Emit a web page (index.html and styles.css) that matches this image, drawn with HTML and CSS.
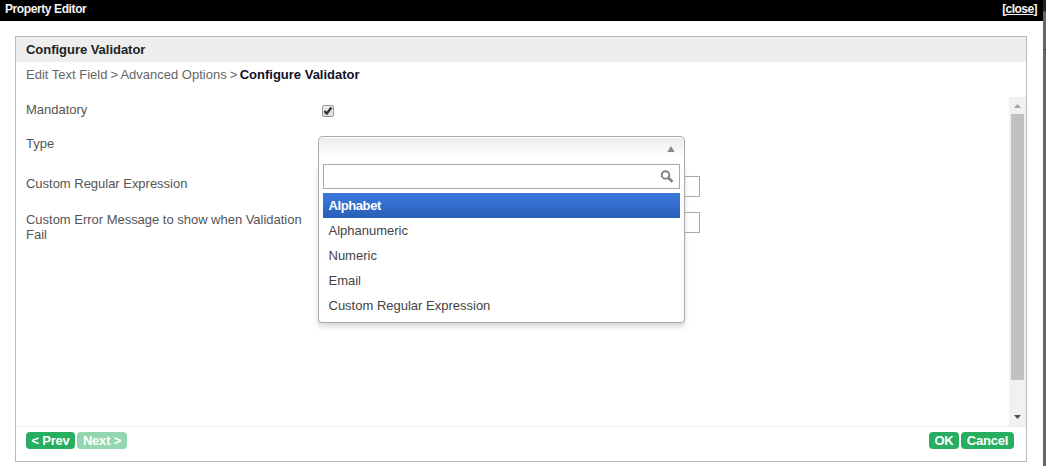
FILE: index.html
```html
<!DOCTYPE html>
<html lang="en">
<head>
<meta charset="utf-8">
<title>Property Editor</title>
<link rel="stylesheet" href="styles.css">
</head>
<body>
<div class="shell">
  <main class="dialog">
    <header class="topbar"><span class="topbar-title">Property Editor</span><a class="close">[<u>close</u>]</a></header>
    <section class="panel">
      <h1 class="panel-title">Configure Validator</h1>
      <nav class="crumbs">Edit Text Field<span class="sep"> &gt; </span>Advanced Options<span class="sep"> &gt; </span><b class="current">Configure Validator</b></nav>
      <div class="scroller">
        <form class="fields">
          <div class="row row-mandatory">
            <label class="label">Mandatory</label>
            <span class="checkbox"><svg class="tick" width="10" height="10" viewBox="0 0 10 10"><path d="M1.4 5.2 3.8 7.4 8.4 1.6" fill="none" stroke="#333" stroke-width="2.4"/></svg></span>
          </div>
          <div class="row row-type">
            <label class="label">Type</label>
            <div class="select">
              <div class="select-head"><svg width="8" height="6" viewBox="0 0 8 6"><path d="M4 0 7.7 6H.3z" fill="#888"/></svg></div>
              <div class="menu">
                <div class="search"><svg width="14" height="14" viewBox="0 0 14 14"><circle cx="5.5" cy="5" r="3.8" fill="none" stroke="#808080" stroke-width="1.9"/><path d="m8.2 7.8 4.3 4" stroke="#808080" stroke-width="2.6"/></svg></div>
                <ul class="options">
                  <li class="option active">Alphabet</li>
                  <li class="option">Alphanumeric</li>
                  <li class="option">Numeric</li>
                  <li class="option">Email</li>
                  <li class="option">Custom Regular Expression</li>
                </ul>
              </div>
            </div>
          </div>
          <div class="row"><label class="label">Custom Regular Expression</label><span class="input"></span></div>
          <div class="row"><label class="label">Custom Error Message to show when Validation Fail</label><span class="input"></span></div>
        </form>
        <div class="scrollbar">
          <svg class="arrow" width="17" height="17" viewBox="0 0 17 17"><path d="M8.5 7 12 11H5z" fill="#a3a3a3"/></svg>
          <div class="thumb"></div>
          <svg class="arrow" width="17" height="17" viewBox="0 0 17 17"><path d="M5 6h7l-3.5 4z" fill="#505050"/></svg>
        </div>
      </div>
      <footer class="footer">
        <div class="group"><span class="btn prev">&lt; Prev</span><span class="btn next">Next &gt;</span></div>
        <div class="group"><span class="btn ok">OK</span><span class="btn cancel">Cancel</span></div>
      </footer>
    </section>
  </main>
  <aside class="backdrop"></aside>
</div>
</body>
</html>
```
FILE: styles.css
```css
* { box-sizing: border-box; }
body { margin: 0; font: 13px/15px "Liberation Sans", Arial, sans-serif; color: #555; background: #fff; }
.shell { display: flex; width: 1046px; height: 466px; overflow: hidden; }
.dialog { width: 1043px; }
.backdrop { width: 3px; background: linear-gradient(#222 11px, #555 11px, #666 13px, #666 49px, #444 49px, #444 50px, #666 50px); }
.topbar { height: 21px; background: #000; color: #f4f4f4; display: flex; justify-content: space-between; padding: 2px 6px 0 5px; font-size: 12px; }
.topbar-title { font-weight: bold; letter-spacing: -.4px; }
.close { font-weight: bold; letter-spacing: -.55px; }
.panel { width: 1012px; height: 426px; margin: 15px 0 0 15px; border: 1px solid #b9b9b9; display: flex; flex-direction: column; }
.panel-title { margin: 0; height: 25px; padding: 5px 10px; background: #eee; color: #222; font: bold 13px/15px "Liberation Sans", Arial, sans-serif; letter-spacing: -.03px; }
.crumbs { height: 35px; padding: 5px 10px; white-space: pre; color: #666; }
.sep { letter-spacing: -.6px; }
.current { color: #10102a; }
.scroller { height: 329px; display: flex; justify-content: space-between; }
.fields { width: 990px; padding: 5px 0 0 10px; }
.row { display: flex; height: 36px; align-items: flex-start; }
.row-mandatory { height: 34px; }
.row-type { height: 40px; }
.label { width: 292px; padding-right: 8px; letter-spacing: -.02px; }
.checkbox { width: 12px; height: 12px; margin: 3px 0 0 4px; border: 1px solid #999; border-radius: 2px; background: linear-gradient(#eee, #ddd); display: flex; align-items: center; justify-content: center; }
.tick { flex: none; }
.input { width: 382px; height: 21px; border: 1px solid #aaa; }
.select { position: relative; z-index: 2; width: 367px; }
.select-head { height: 28px; border: 1px solid #aaa; border-bottom: 0; border-radius: 5px 5px 0 0; background: linear-gradient(#eee 10%, #fff 80%); box-shadow: inset 0 1px #fff; display: flex; justify-content: flex-end; padding: 9px 9px 0; }
.menu { position: absolute; top: 28px; left: 0; width: 367px; height: 159px; padding: 0 4px; background: #fff; border: 1px solid #aaa; border-top: 0; border-radius: 0 0 4px 4px; box-shadow: 0 4px 5px rgba(0,0,0,.15); }
.search { height: 25px; border: 1px solid #aaa; display: flex; justify-content: flex-end; padding: 5px 5px 0; }
.options { list-style: none; margin: 4px 0 0; padding: 0; }
.option { height: 25px; padding: 5px 5.5px; color: #444; }
.active { color: #fff; font-weight: bold; letter-spacing: -.4px; background: linear-gradient(#3875d7 20%, #2a62bc 90%); }
.scrollbar { width: 17px; background: #f1f1f1; display: flex; flex-direction: column; }
.thumb { width: 13px; height: 266px; margin: 0 2px auto; background: #c1c1c1; }
.arrow { flex: none; display: block; }
.footer { border-top: 1px solid #eee; display: flex; justify-content: space-between; padding: 5px 12px 0 10px; }
.group { display: flex; gap: 2px; }
.btn { height: 17px; border-radius: 4px; background: #27ae60; color: #fff; font-weight: bold; line-height: 17px; text-align: center; letter-spacing: -.2px; }
.prev { width: 49px; }
.next { width: 50px; background: #93d7b0; }
.ok { width: 30px; }
.cancel { width: 53px; }
```
